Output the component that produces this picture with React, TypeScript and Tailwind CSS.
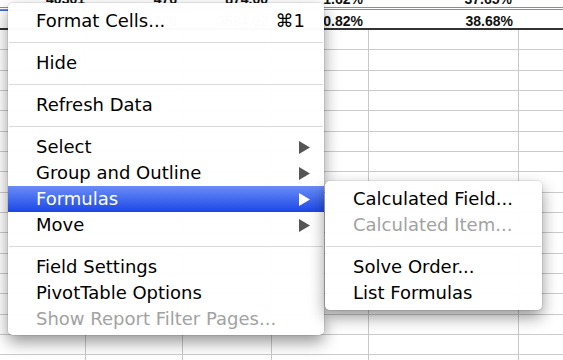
import React from "react";

type Item =
  | { kind: "sep" }
  | {
      kind: "item";
      label: string;
      shortcut?: string;
      sub?: boolean;
      disabled?: boolean;
      active?: boolean;
    };

const mainMenu: Item[] = [
  { kind: "item", label: "Format Cells...", shortcut: "⌘1" },
  { kind: "sep" },
  { kind: "item", label: "Hide" },
  { kind: "sep" },
  { kind: "item", label: "Refresh Data" },
  { kind: "sep" },
  { kind: "item", label: "Select", sub: true },
  { kind: "item", label: "Group and Outline", sub: true },
  { kind: "item", label: "Formulas", sub: true, active: true },
  { kind: "item", label: "Move", sub: true },
  { kind: "sep" },
  { kind: "item", label: "Field Settings" },
  { kind: "item", label: "PivotTable Options" },
  { kind: "item", label: "Show Report Filter Pages...", disabled: true },
];

const formulasMenu: Item[] = [
  { kind: "item", label: "Calculated Field..." },
  { kind: "item", label: "Calculated Item...", disabled: true },
  { kind: "sep" },
  { kind: "item", label: "Solve Order..." },
  { kind: "item", label: "List Formulas" },
];

// column widths of the sheet, border sits on the last pixel
const colW = ["w-[86px]", "w-[97px]", "w-[89px]", "w-[97px]", "w-[150px]"];

const Arrow = ({ active }: { active?: boolean }) => (
  <svg
    width="11"
    height="13"
    viewBox="0 0 11 13"
    className={active ? "fill-white" : "fill-[#555555]"}
  >
    <path d="M0 0L11 6.5L0 13Z" />
  </svg>
);

const MenuItems = ({ items }: { items: Item[] }) => (
  <>
    {items.map((it, i) =>
      it.kind === "sep" ? (
        <div key={i} className="h-4 flex items-center px-[1px]">
          <div className="h-px w-full bg-[#dadada]" />
        </div>
      ) : (
        <div
          key={i}
          className={`h-[26px] flex items-center pl-7 pr-[14px] leading-[26px] ${
            it.active
              ? "bg-gradient-to-b from-[#6b8bf6] to-[#1c44e6] text-white"
              : it.disabled
              ? "text-[#a2a2a2]"
              : "text-black"
          }`}
        >
          <span className="flex-1 whitespace-nowrap">{it.label}</span>
          {it.shortcut && <span className="pr-[5px]">{it.shortcut}</span>}
          {it.sub && <Arrow active={it.active} />}
        </div>
      )
    )}
  </>
);

const Sheet = () => (
  <div className="-mt-[12px] font-['Liberation_Sans',Arial,sans-serif] text-[14px] text-[#111111]">
    {/* header-ish row, mostly cut off */}
    <div className="flex h-[22px] border-b-[3px] border-double border-[#8d9c42] font-bold leading-[22px]">
      <div className={`${colW[0]} text-right pr-[1px]`}>40301</div>
      <div className={`${colW[1]} text-right pr-[6px]`}>476</div>
      <div className={`${colW[2]} text-right pr-[4px]`}>874.00</div>
      <div className={`${colW[3]} text-right pr-[6px]`}>1.62%</div>
      <div className={`${colW[4]} text-right pr-[7px]`}>37.65%</div>
    </div>
    {/* totals row */}
    <div className="flex h-[20px] border-b-2 border-[#333333] leading-[22px]">
      <div className={`${colW[0]} border-t border-[#4065d8]`} />
      <div className={`${colW[1]} text-right pr-[6px]`}>1206</div>
      <div className={`${colW[2]} text-right pr-[4px]`}>3684.62</div>
      <div className={`${colW[3]} text-right pr-[6px] font-bold`}>0.82%</div>
      <div className={`${colW[4]} text-right pr-[6px] font-bold`}>38.68%</div>
    </div>
    {Array.from({ length: 17 }).map((_, r) => (
      <div key={r} className="flex h-[20.33px] border-b border-[#cbcbcb]">
        {colW.map((w, c) => (
          <div key={c} className={`${w} border-r border-[#c9c9c9]`} />
        ))}
        <div className="flex-1" />
      </div>
    ))}
  </div>
);

export default function App() {
  return (
    <div className="relative w-[563px] h-[360px] overflow-hidden bg-white font-['DejaVu_Sans',Verdana,sans-serif] text-[18px]">
      <Sheet />

      <div className="absolute left-[8px] top-[3px] w-[316px] pt-[5px] pb-[3px] rounded-[5px] bg-[rgba(255,255,255,0.985)] shadow-[0_0_0_1px_rgba(0,0,0,0.07),0_7px_16px_rgba(0,0,0,0.42)]">
        <MenuItems items={mainMenu} />
      </div>

      <div className="absolute left-[325px] top-[181px] w-[217px] pt-[5px] pb-[4px] rounded-[5px] bg-[rgba(255,255,255,0.985)] shadow-[0_0_0_1px_rgba(0,0,0,0.07),0_7px_16px_rgba(0,0,0,0.42)]">
        <MenuItems items={formulasMenu} />
      </div>
    </div>
  );
}
